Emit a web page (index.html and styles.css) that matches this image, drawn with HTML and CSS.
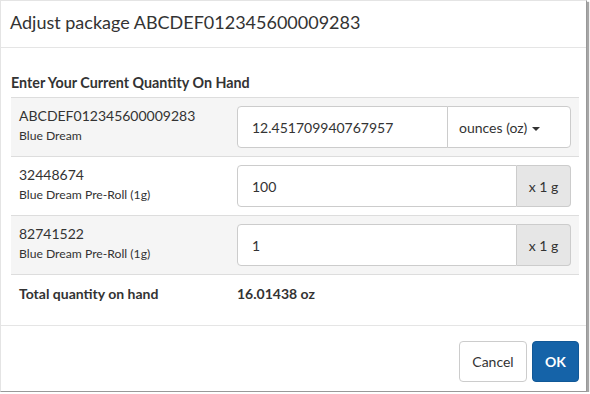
FILE: index.html
```html
<!DOCTYPE html>
<html lang="en">
<head>
  <meta charset="UTF-8">
  <title>Adjust package</title>
  <link rel="stylesheet" href="styles.css">
</head>
<body>
  <div class="modal">
    <div class="modal-header">
      <h4 class="modal-title">Adjust package ABCDEF012345600009283</h4>
    </div>

    <div class="modal-body">
      <div class="section-title">Enter Your Current Quantity On Hand</div>
      <table class="qty-table">
        <tr class="striped">
          <td class="pkg">
            <div class="pkg-id">ABCDEF012345600009283</div>
            <div class="pkg-name">Blue Dream</div>
          </td>
          <td class="qty">
            <div class="input-group">
              <input type="text" value="12.451709940767957">
              <button class="unit-btn">ounces (oz) <span class="caret"></span></button>
            </div>
          </td>
        </tr>
        <tr>
          <td class="pkg">
            <div class="pkg-id">32448674</div>
            <div class="pkg-name">Blue Dream Pre-Roll (1g)</div>
          </td>
          <td class="qty">
            <div class="input-group">
              <input type="text" value="100">
              <span class="addon">x 1 g</span>
            </div>
          </td>
        </tr>
        <tr class="striped">
          <td class="pkg">
            <div class="pkg-id">82741522</div>
            <div class="pkg-name">Blue Dream Pre-Roll (1g)</div>
          </td>
          <td class="qty">
            <div class="input-group">
              <input type="text" value="1">
              <span class="addon">x 1 g</span>
            </div>
          </td>
        </tr>
        <tr class="total">
          <td class="pkg">Total quantity on hand</td>
          <td class="qty">16.01438 oz</td>
        </tr>
      </table>
    </div>

    <div class="modal-footer">
      <button class="btn btn-default">Cancel</button>
      <button class="btn btn-primary">OK</button>
    </div>
  </div>
</body>
</html>
```

FILE: styles.css
```css
body {
  margin: 0;
  font-family: 'Lato', 'Liberation Sans', sans-serif;
  color: #333;
  background-color: #fff;
}
.modal {
  width: 587px;
  height: 392px;
  box-sizing: border-box;
  border: 1px solid #e4e4e4;
  border-right-color: #999;
  border-bottom-color: #999;
  background-color: #fff;
  box-shadow: 2px 2px 1px rgba(0, 0, 0, 0.35);
  display: flex;
  flex-direction: column;
}
.modal-header {
  height: 47px;
  box-sizing: border-box;
  padding: 0 9px;
  border-bottom: 1px solid #e5e5e5;
  display: flex;
  align-items: center;
}
.modal-title {
  margin: 0;
  font-size: 18px;
  font-weight: normal;
  position: relative;
  top: -2px;
}
.modal-body {
  flex: 1;
  padding: 25px 7px 0 10px;
}
.section-title {
  font-size: 14.3px;
  font-weight: bold;
  line-height: 20px;
  margin-bottom: 4px;
}
.qty-table {
  width: 100%;
  border-collapse: collapse;
  border-top: 1px solid #ddd;
}
.qty-table td {
  padding: 8px;
  vertical-align: top;
  border-bottom: 1px solid #ddd;
}
.qty-table tr.striped td {
  background-color: #f5f5f5;
}
.qty-table td.pkg {
  width: 202px;
}
.pkg-id {
  font-size: 14px;
  line-height: 20px;
}
.pkg-name {
  font-size: 12.2px;
  line-height: 20px;
}
.input-group {
  display: flex;
  height: 42px;
}
.input-group input {
  flex: 1;
  min-width: 0;
  box-sizing: border-box;
  height: 42px;
  padding: 0 14px;
  border: 1px solid #ccc;
  border-radius: 4px 0 0 4px;
  font-family: inherit;
  font-size: 14px;
  color: #333;
  background-color: #fff;
}
.unit-btn {
  width: 124px;
  box-sizing: border-box;
  border: 1px solid #ccc;
  border-left: 1px solid #ccc;
  margin-left: -1px;
  border-radius: 0 4px 4px 0;
  background-color: #fff;
  font-family: inherit;
  font-size: 14px;
  color: #333;
  padding: 0 0 0 11px;
  text-align: left;
}
.caret {
  display: inline-block;
  width: 0;
  height: 0;
  margin-left: 1px;
  vertical-align: middle;
  border-top: 4px solid #333;
  border-left: 4px solid transparent;
  border-right: 4px solid transparent;
}
.addon {
  width: 54px;
  box-sizing: border-box;
  border: 1px solid #ccc;
  border-left: none;
  border-radius: 0 4px 4px 0;
  background-color: #e6e6e6;
  font-size: 14px;
  display: flex;
  align-items: center;
  justify-content: center;
}
.qty-table tr.total td {
  border-bottom: none;
  font-size: 14px;
  font-weight: bold;
  line-height: 20px;
  padding-top: 9px;
}
.modal-footer {
  height: 66px;
  box-sizing: border-box;
  border-top: 1px solid #e5e5e5;
  padding: 15px 7px 0 0;
  display: flex;
  justify-content: flex-end;
  align-items: flex-start;
  gap: 5px;
}
.btn {
  height: 41px;
  border-radius: 4px;
  font-family: inherit;
  font-size: 14px;
  cursor: pointer;
}
.btn-default {
  width: 68px;
  background-color: #fff;
  border: 1px solid #ccc;
  color: #333;
}
.btn-primary {
  width: 47px;
  background-color: #1563a8;
  border: 1px solid #115897;
  color: #fff;
  font-weight: bold;
}
```
